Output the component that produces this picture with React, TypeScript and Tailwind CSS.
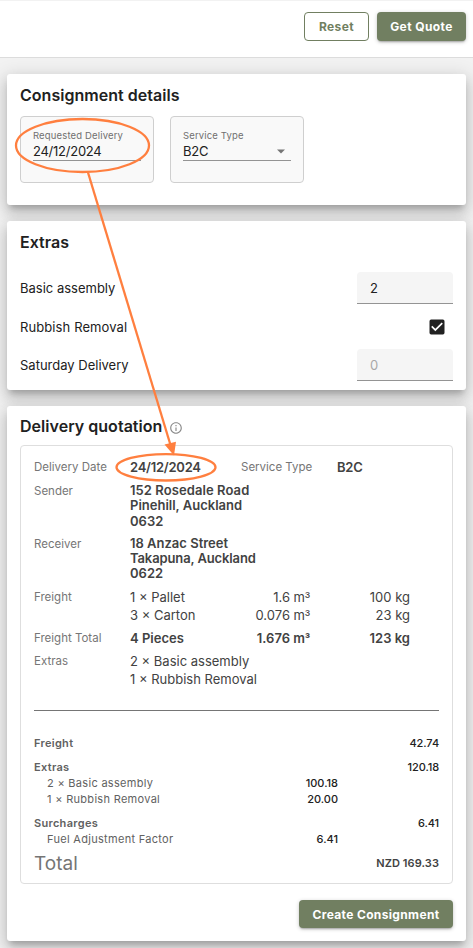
import type { ReactNode } from "react";
import { MdCheckBox, MdInfoOutline } from "react-icons/md";

const CARD =
  "rounded-[3px] bg-white px-[13px] shadow-[0_6px_6px_-3px_rgba(0,0,0,0.2),0_8px_14px_1px_rgba(0,0,0,0.12),0_3px_18px_3px_rgba(0,0,0,0.11)]";
const BTN =
  "flex items-center justify-center rounded-[4px] pt-px text-[12px] font-bold whitespace-nowrap";
const SOLID =
  "bg-[#717f61] text-white shadow-[0_2px_2px_-1px_rgba(0,0,0,0.25),0_1px_4px_rgba(0,0,0,0.2)]";

function Title({ children }: { children: ReactNode }) {
  return <h2 className="text-[16px] leading-[20px] font-semibold tracking-[0.03px] text-[#212121]">{children}</h2>;
}

function Field({ label, value, select }: { label: string; value: string; select?: boolean }) {
  return (
    <div className="h-[67px] w-[134px] rounded-[4px] border border-[#cfcfcf] bg-[#f9f9f9] px-3 pt-[13px]">
      <div className="text-[9.5px] leading-[12px] tracking-[0.15px] text-[#707070]">{label}</div>
      <div className="flex h-[19px] items-center justify-between border-b border-[#949494] pr-1 text-[13px] leading-[18px] tracking-[-0.25px] text-[#212121]">
        {value}
        {select && (
          <svg width="10" height="5" viewBox="0 0 10 5" className="mr-[1px]">
            <path d="M1 0.5h8L5 4.5z" fill="#757575" />
          </svg>
        )}
      </div>
    </div>
  );
}

function Count({ value, dim }: { value: string; dim?: boolean }) {
  return (
    <div
      className={`flex h-8 w-24 items-center rounded-t-[4px] border-b border-[#949494] bg-[#f5f5f5] px-[13px] pt-[2px] text-[13px] ${dim ? "text-[#a8a8a8]" : "text-[#212121]"}`}
    >
      {value}
    </div>
  );
}

function Row({ label, children }: { label: string; children: ReactNode }) {
  return (
    <div className="flex">
      <div className="w-24 shrink-0 text-[11.5px] leading-[16px] font-normal text-[#767676]">{label}</div>
      <div className="grow">{children}</div>
    </div>
  );
}

function Line({ name, volume, weight }: { name: string; volume?: number; weight?: string }) {
  return (
    <div className="flex h-[18px] items-center whitespace-nowrap">
      <span className="w-[90px]">{name}</span>
      <span className="w-[90px] text-right">
        {volume !== undefined && (
          <>
            {volume} m<span className="font-['Liberation_Sans',sans-serif] text-[15px] leading-none">³</span>
          </>
        )}
      </span>
      <span className="w-[100px] text-right">{weight}</span>
    </div>
  );
}

function Charge({ label, sub, total }: { label: string; sub?: string; total?: string }) {
  return (
    <div className="flex h-4 items-center text-[11px] leading-[16px] font-medium whitespace-nowrap text-[#212121]">
      <span
        className={
          sub
            ? "w-[204px] pl-[13px] font-normal tracking-[0.3px] text-[#616161]"
            : "w-[204px] font-semibold tracking-[0.3px] text-[#616161]"
        }
      >
        {label}
      </span>
      <span className="w-[100px] text-right">{sub}</span>
      <span className="grow text-right tracking-[-0.1px]">{total}</span>
    </div>
  );
}

export default function App() {
  return (
    <div className="relative h-[948px] w-[473px] overflow-hidden bg-[#f2f2f2] font-['Inter','Liberation_Sans',sans-serif]">
      <header className="flex h-[58px] items-start justify-end gap-2 border-t border-b border-t-[#f2f2f2] border-b-[#dcdcdc] bg-white pt-[11px] pr-[7px]">
        <button className={`${BTN} h-[29px] w-[65px] border border-[#717f61] tracking-[0.4px] text-[#717f61]`}>Reset</button>
        <button className={`${BTN} ${SOLID} h-[29px] w-[89px] tracking-[0.4px]`}>Get Quote</button>
      </header>

      <main className="flex flex-col gap-4 px-[7px] pt-4">
        <section className={`${CARD} h-[131px] pt-[11px]`}>
          <Title>Consignment details</Title>
          <div className="mt-[11px] flex gap-4">
            <Field label="Requested Delivery" value="24/12/2024" />
            <Field label="Service Type" value="B2C" select />
          </div>
        </section>

        <section className={`${CARD} h-[169px] pt-[11px] text-[13px] text-[#212121]`}>
          <Title>Extras</Title>
          <div className="mt-[20px] flex h-8 items-center justify-between">
            <span className="pt-[2px]">Basic assembly</span>
            <Count value="2" />
          </div>
          <div className="mt-[13px] flex h-5 items-center justify-between pr-[6px]">
            <span className="pt-[2px] tracking-[0.1px]">Rubbish Removal</span>
            <MdCheckBox size={20} color="#212121" />
          </div>
          <div className="mt-[12px] flex h-8 items-center justify-between">
            <span className="pt-[2px]">Saturday Delivery</span>
            <Count value="0" dim />
          </div>
        </section>

        <section className={`${CARD} h-[535px] pt-[10px]`}>
          <div className="flex items-center gap-[7px]">
            <Title>Delivery quotation</Title>
            <MdInfoOutline size={14} color="#8a8a8a" className="mt-[4px]" />
          </div>
          <div className="mt-[9px] h-[439px] rounded-[4px] border border-[#dedede] px-[13px] pt-[10px] text-[13px] text-[#424242]">
            <div className="flex h-6 items-center font-semibold">
              <span className="w-24 text-[11.5px] font-normal text-[#767676]">Delivery Date</span>
              <span className="w-[111px] tracking-[-0.25px]">24/12/2024</span>
              <span className="w-24 text-[11.5px] font-normal text-[#767676]">Service Type</span>
              <span className="tracking-[-0.25px]">B2C</span>
            </div>
            <div className="mt-[3px] flex flex-col gap-[7px] leading-[15.3px] font-semibold">
              <Row label="Sender">
                <span className="tracking-[0.08px]">152 Rosedale Road</span><br />Pinehill, Auckland<br />0632
              </Row>
              <Row label="Receiver">
                18 Anzac Street<br /><span className="tracking-[-0.12px]">Takapuna, Auckland</span><br />0622
              </Row>
            </div>
            <div className="mt-[7px] flex flex-col gap-[5px]">
              <Row label="Freight">
                <Line name="1 × Pallet" volume={1.6} weight="100 kg" />
                <Line name="3 × Carton" volume={0.076} weight="23 kg" />
              </Row>
              <Row label="Freight Total">
                <div className="font-semibold">
                  <Line name="4 Pieces" volume={1.676} weight="123 kg" />
                </div>
              </Row>
              <Row label="Extras">
                <Line name="2 × Basic assembly" />
                <Line name="1 × Rubbish Removal" />
              </Row>
            </div>
            <div className="mt-[21px] mb-6 h-px bg-[#757575]" />
            <Charge label="Freight" total="42.74" />
            <div className="mt-2">
              <Charge label="Extras" total="120.18" />
              <Charge label="2 × Basic assembly" sub="100.18" />
              <Charge label="1 × Rubbish Removal" sub="20.00" />
            </div>
            <div className="mt-2">
              <Charge label="Surcharges" total="6.41" />
              <Charge label="Fuel Adjustment Factor" sub="6.41" />
            </div>
            <div className="mt-1 flex h-6 items-center justify-between">
              <span className="pt-[2px] text-[19px] text-[#757575]">Total</span>
              <span className="text-[11px] font-semibold tracking-[0.08px]">NZD 169.33</span>
            </div>
          </div>
          <div className="mt-4 flex justify-end">
            <button className={`${BTN} ${SOLID} h-7 w-[154px] tracking-[0.35px]`}>Create Consignment</button>
          </div>
        </section>
      </main>

      {/* Annotation linking the requested date to the quoted date */}
      <svg className="pointer-events-none absolute inset-0" width="473" height="948" viewBox="0 0 473 948" fill="none">
        <g stroke="#ff7f3f" strokeWidth="2.3">
          <ellipse cx="82.5" cy="145.5" rx="66.5" ry="26.5" />
          <ellipse cx="166" cy="467.3" rx="49.5" ry="13.2" />
          <path d="M88 172.5L170.5 445" />
        </g>
        <path d="M164.5 444.5L176 441.8L174 455.5z" fill="#ff7f3f" />
      </svg>
    </div>
  );
}
